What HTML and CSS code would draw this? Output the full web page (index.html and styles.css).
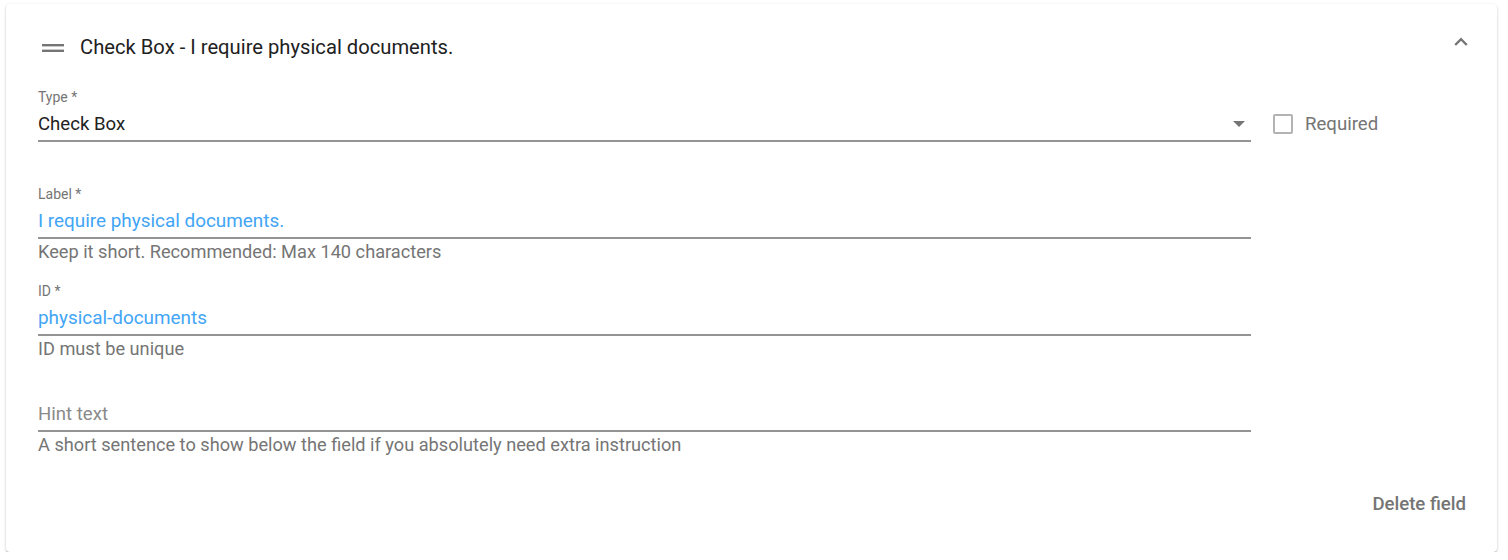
FILE: index.html
```html
<!DOCTYPE html>
<html lang="en">
<head>
    <meta charset="UTF-8">
    <meta name="viewport" content="width=device-width, initial-scale=1.0">
    <title>Form field editor</title>
    <link rel="stylesheet" href="styles.css">
</head>
<body>
    <div class="card">
        <div class="card-header">
            <span class="drag-handle">
                <svg width="22" height="8" viewBox="0 0 22 8"><rect x="0" y="0" width="22" height="2.4" fill="#757575"/><rect x="0" y="5.6" width="22" height="2.4" fill="#757575"/></svg>
            </span>
            <h2 class="card-title">Check Box - I require physical documents.</h2>
            <button class="collapse-btn">
                <svg width="14" height="9" viewBox="0 0 14 9"><polyline points="1.2,8 7,2.2 12.8,8" fill="none" stroke="#757575" stroke-width="2.4"/></svg>
            </button>
        </div>

        <div class="card-body">
            <div class="type-row">
                <div class="field">
                    <div class="field-label">Type *</div>
                    <div class="field-input">
                        <span class="field-value">Check Box</span>
                        <svg class="select-arrow" width="12" height="6" viewBox="0 0 12 6"><polygon points="0,0 12,0 6,6" fill="#757575"/></svg>
                    </div>
                </div>
                <label class="required-check">
                    <span class="check-box"></span>
                    Required
                </label>
            </div>

            <div class="field spaced-lg">
                <div class="field-label">Label *</div>
                <div class="field-input">
                    <span class="field-value blue">I require physical documents.</span>
                </div>
                <div class="field-help">Keep it short. Recommended: Max 140 characters</div>
            </div>

            <div class="field spaced">
                <div class="field-label">ID *</div>
                <div class="field-input">
                    <span class="field-value blue">physical-documents</span>
                </div>
                <div class="field-help">ID must be unique</div>
            </div>

            <div class="field spaced-sm">
                <div class="field-label"></div>
                <div class="field-input">
                    <span class="field-value placeholder">Hint text</span>
                </div>
                <div class="field-help">A short sentence to show below the field if you absolutely need extra instruction</div>
            </div>
        </div>

        <div class="card-footer">
            <button class="delete-btn">Delete field</button>
        </div>
    </div>
</body>
</html>
```

FILE: styles.css
```css
body {
    margin: 0;
    padding: 4px 11px 0 6px;
    background: #fff;
    font-family: Roboto, "Liberation Sans", Arial, sans-serif;
}

.card {
    background: #fff;
    border-radius: 4px;
    box-shadow: 0 1px 3px rgba(0, 0, 0, 0.2), 0 1px 1px rgba(0, 0, 0, 0.12), 0 2px 1px -1px rgba(0, 0, 0, 0.1);
    padding: 0 31px 30px 32px;
}

.card-header {
    display: flex;
    align-items: center;
    height: 85px;
}

.drag-handle {
    width: 30px;
    display: flex;
    justify-content: center;
    margin-top: 2px;
}

.card-title {
    margin: 0 0 0 12px;
    flex: 1;
    font-size: 20.2px;
    font-weight: 400;
    color: #212121;
}

.collapse-btn {
    align-self: flex-start;
    margin: 33px -2px 0 0;
    padding: 0;
    border: none;
    background: none;
    display: flex;
}

.type-row {
    display: flex;
    align-items: flex-start;
}

.field {
    width: 1213px;
}

.spaced-lg { margin-top: 44px; }
.spaced { margin-top: 21px; }
.spaced-sm { margin-top: 20px; }

.field-label {
    font-size: 14px;
    line-height: 16px;
    height: 16px;
    color: #757575;
}

.field-input {
    margin-top: 7px;
    padding-bottom: 4px;
    border-bottom: 2px solid #949494;
    display: flex;
    align-items: center;
    justify-content: space-between;
}

.field-value {
    font-size: 18.6px;
    line-height: 24px;
    color: #212121;
}

.field-value.blue {
    font-size: 18.9px;
    color: #42a5f5;
}

.field-value.placeholder {
    color: #8a8a8a;
}

.select-arrow {
    margin-right: 6px;
}

.field-help {
    margin-top: 3px;
    font-size: 18.2px;
    line-height: 20px;
    color: #757575;
}

.required-check {
    margin: 23px 0 0 22px;
    height: 24px;
    display: flex;
    align-items: center;
    gap: 12px;
    font-size: 18.6px;
    color: #757575;
}

.check-box {
    width: 16px;
    height: 16px;
    border: 2px solid #b3b3b3;
    border-radius: 2px;
}

.card-footer {
    margin-top: 31px;
    display: flex;
    justify-content: flex-end;
}

.delete-btn {
    border: none;
    background: none;
    padding: 0;
    line-height: 36px;
    font-family: Roboto, "Liberation Sans", Arial, sans-serif;
    font-size: 18.6px;
    font-weight: 500;
    color: #757575;
}
```
